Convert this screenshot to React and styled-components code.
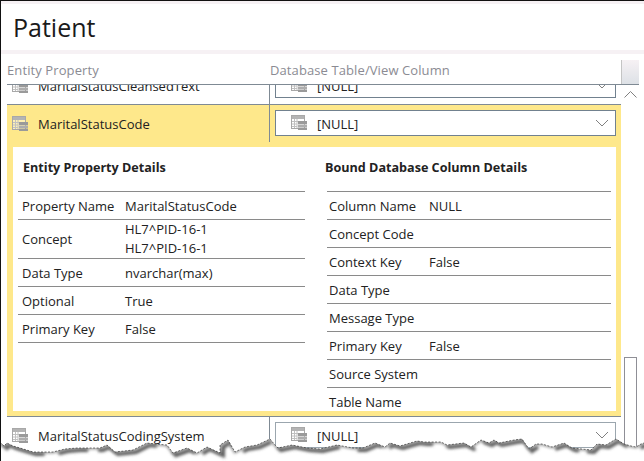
import styled, { createGlobalStyle } from "styled-components";

const GlobalStyle = createGlobalStyle`
  html, body {
    margin: 0;
    padding: 0;
    background: #fff;
  }
  body {
    font-family: "Open Sans", "Noto Sans", sans-serif;
    color: #222;
  }
`;

const Page = styled.div`
  position: relative;
  width: 644px;
  height: 461px;
  overflow: hidden;
  background: #fff;
  box-sizing: border-box;
  border-top: 1px solid #111;
  border-left: 1px solid #111;
  display: flex;
  flex-direction: column;
`;

const TitleBar = styled.div`
  height: 46px;
  margin-top: 3px;
  padding-left: 12px;
  font-size: 25px;
  line-height: 46px;
  color: #1a1a1a;
  background: #fff;
  box-shadow: 0 -3px 0 #f6f1f4;
  flex: none;
`;

const Stripe = styled.div`
  height: 4px;
  background: #f6f1f4;
  flex: none;
`;

const HeaderRow = styled.div`
  display: flex;
  height: 30px;
  margin-left: 6px;
  width: 632px;
  flex: none;
  border-bottom: 1px solid #7f8a94;
  box-sizing: content-box;
`;

const HeaderCell = styled.div`
  width: ${(p) => p.$width}px;
  font-size: 13px;
  letter-spacing: 0.1px;
  line-height: 33px;
  color: #8b8b93;
  white-space: nowrap;
`;

const HeaderCorner = styled.div`
  margin-left: auto;
  margin-top: 6px;
  width: 17px;
  border-left: 1px solid #c4c4c4;
  background: linear-gradient(#f6f1f4, #dde1e6);
`;

const Body = styled.div`
  display: flex;
  flex: 1;
  min-height: 0;
`;

const List = styled.div`
  width: 614px;
  margin-left: 6px;
  flex: none;
`;

const ClippedRow = styled.div`
  height: 20px;
  overflow: hidden;
  display: flex;
  flex-direction: column;
  justify-content: flex-end;
`;

const Row = styled.div`
  display: flex;
  height: 37px;
  flex: none;
  border-bottom: ${(p) => (p.$plain ? "none" : "1px solid #7f8a94")};
  box-sizing: content-box;
`;

const NameCell = styled.div`
  width: 263px;
  box-sizing: border-box;
  padding-left: 5px;
  display: flex;
  align-items: center;
  gap: 9px;
  font-size: 13px;
  color: #222;
  border-right: 1px solid #7f8a94;
`;

const ComboCell = styled.div`
  flex: 1;
  padding: 5px 5px 6px 5px;
  box-sizing: border-box;
  min-width: 0;
`;

const Combo = styled.div`
  height: 26px;
  box-sizing: border-box;
  background: #fff;
  border: 1px solid ${(p) => p.$border};
  display: flex;
  align-items: center;
  padding-left: 15px;
  gap: 9px;
  font-size: 13px;
  color: #222;
`;

const ComboText = styled.span`
  padding-top: 2px;
`;

const Chevron = styled.svg`
  margin-left: auto;
  margin-right: 6px;
  flex: none;
`;

const Expanded = styled.div`
  background: #fee88b;
  border-bottom: 1px solid #7f8a94;
  box-sizing: content-box;
  height: 311px;
`;

const Details = styled.div`
  margin: 5px 5px 0 6px;
  height: 264px;
  background: #fff;
  overflow: hidden;
  display: grid;
  grid-template-columns: 287px 284px;
  column-gap: 22px;
  padding: 0 5px;
  box-sizing: border-box;
`;

const DetailTitle = styled.div`
  height: 44px;
  box-sizing: content-box;
  line-height: 42px;
  font-size: 12.6px;
  font-weight: 700;
  color: #222;
  text-indent: ${(p) => p.$indent}px;
  border-bottom: 1px solid #8a8a8a;
  white-space: nowrap;
`;

const DetailRow = styled.div`
  display: flex;
  align-items: center;
  height: ${(p) => (p.$tall ? 39 : 28)}px;
  border-bottom: 1px solid #8a8a8a;
  font-size: 13px;
  line-height: 19px;
  color: #222;
  padding: ${(p) => (p.$tall ? 0 : 1)}px 0 0 ${(p) => p.$inset}px;
  box-sizing: border-box;
`;

const Label = styled.div`
  width: ${(p) => p.$width}px;
  flex: none;
`;

const ScrollColumn = styled.div`
  flex: 1;
  display: flex;
  flex-direction: column;
  align-items: flex-start;
  padding-left: 3px;
`;

const ScrollUp = styled.svg`
  margin-top: 6px;
  flex: none;
`;

const ScrollThumb = styled.div`
  margin-top: 259px;
  width: 13px;
  height: 120px;
  flex: none;
  box-sizing: border-box;
  background: #fff;
  border: 1px solid #8f8f96;
  border-bottom: none;
`;

const TornEdge = styled.svg`
  position: absolute;
  left: -1px;
  top: -1px;
  pointer-events: none;
`;

const edge =
  "0,442 4,446 7,443 13,446 20,448 33,452 53,452 65,449 77,448 100,448 107,445 115,452 124,451 133,450 147,443 156,444 167,445 173,453 187,448 197,453 207,447 220,453 " +
  "220,445 228,440 235,452 245,447 257,445 270,439 275,445 278,448 292,445 307,448 320,449 337,445 353,448 363,448 375,443 385,447 390,443 400,446 417,441 424,442 " +
  "441,442 447,445 464,443 471,447 481,440 489,443 494,440 499,443 514,440 522,439 529,449 536,444 542,444 552,447 564,443 572,448 591,450 597,444 606,445 616,439 624,444 631,446 636,447 641,444 644,443";

const TableIcon = () => (
  <svg width="17" height="16" viewBox="0 0 17 16" style={{ flex: "none" }}>
    <rect x="0.5" y="0.5" width="13" height="13" fill="#fff" fillOpacity="0.35" stroke="#a8a8a8" />
    <rect x="1" y="1" width="12" height="3" fill="#b4b4b4" />
    <path d="M1 6.5h7M1 9h5M1 11.5h5M3.5 4v9M6 4v9" stroke="#c0c0c0" strokeWidth="1" fill="none" />
    <rect x="7" y="6" width="9" height="3" fill="#9a9a9a" />
    <rect x="7" y="9.5" width="9" height="2.5" fill="#adadad" />
    <rect x="7" y="12.5" width="9" height="2.5" fill="#9a9a9a" />
  </svg>
);

const ComboBox = ({ border }) => (
  <Combo $border={border}>
    <TableIcon />
    <ComboText>[NULL]</ComboText>
    <Chevron width="14" height="8" viewBox="0 0 14 8">
      <path d="M1 1l6 6 6-6" fill="none" stroke="#808080" strokeWidth="1" />
    </Chevron>
  </Combo>
);

const PropertyRow = ({ name, plain, comboBorder = "#71818f" }) => (
  <Row $plain={plain}>
    <NameCell>
      <TableIcon />
      <span>{name}</span>
    </NameCell>
    <ComboCell>
      <ComboBox border={comboBorder} />
    </ComboCell>
  </Row>
);

const entityDetails = [
  ["Property Name", ["MaritalStatusCode"]],
  ["Concept", ["HL7^PID-16-1", "HL7^PID-16-1"]],
  ["Data Type", ["nvarchar(max)"]],
  ["Optional", ["True"]],
  ["Primary Key", ["False"]],
];

const columnDetails = [
  ["Column Name", ["NULL"]],
  ["Concept Code", []],
  ["Context Key", ["False"]],
  ["Data Type", []],
  ["Message Type", []],
  ["Primary Key", ["False"]],
  ["Source System", []],
  ["Table Name", []],
];

const DetailColumn = ({ title, indent, inset, labelWidth, rows }) => (
  <div>
    <DetailTitle $indent={indent}>{title}</DetailTitle>
    {rows.map(([label, values]) => (
      <DetailRow key={label} $tall={values.length > 1} $inset={inset}>
        <Label $width={labelWidth}>{label}</Label>
        <div>
          {values.map((v, i) => (
            <div key={i}>{v}</div>
          ))}
        </div>
      </DetailRow>
    ))}
  </div>
);

export default function App() {
  return (
    <>
      <GlobalStyle />
      <Page>
        <TitleBar>Patient</TitleBar>
        <Stripe />
        <HeaderRow>
          <HeaderCell $width={263}>Entity Property</HeaderCell>
          <HeaderCell $width={300}>Database Table/View Column</HeaderCell>
          <HeaderCorner />
        </HeaderRow>
        <Body>
          <List>
            <ClippedRow>
              <PropertyRow name="MaritalStatusCleansedText" />
            </ClippedRow>
            <Expanded>
              <PropertyRow name="MaritalStatusCode" plain />
              <Details>
                <DetailColumn title="Entity Property Details" indent={5} inset={4} labelWidth={103} rows={entityDetails} />
                <DetailColumn title="Bound Database Column Details" indent={-2} inset={2} labelWidth={100} rows={columnDetails} />
              </Details>
            </Expanded>
            <PropertyRow name="MaritalStatusCodingSystem" comboBorder="#9ba6ae" />
          </List>
          <ScrollColumn>
            <ScrollUp width="13" height="7" viewBox="0 0 13 7">
              <path d="M0.5 6.5l6-6 6 6" fill="none" stroke="#808080" strokeWidth="1" />
            </ScrollUp>
            <ScrollThumb />
          </ScrollColumn>
        </Body>
        <TornEdge width="644" height="461" viewBox="0 0 644 461">
          <defs>
            <clipPath id="below-edge">
              <polygon points={`${edge} 644,461 0,461`} />
            </clipPath>
            <filter id="soft" x="-5%" y="-100%" width="110%" height="300%">
              <feGaussianBlur stdDeviation="1.6" />
            </filter>
          </defs>
          <polygon points={`${edge} 644,461 0,461`} fill="#fff" />
          <g clipPath="url(#below-edge)">
            <polyline
              points={edge}
              transform="translate(3 2)"
              fill="none"
              stroke="#5a5a5a"
              strokeWidth="4"
              strokeDasharray="46 14 30 10 64 18 26 8"
              filter="url(#soft)"
            />
            <polyline points={edge} fill="none" stroke="#8a8a8a" strokeWidth="2.5" filter="url(#soft)" />
          </g>
          <polyline points={edge} fill="none" stroke="#222" strokeWidth="0.6" strokeDasharray="2 1.5" />
        </TornEdge>
      </Page>
    </>
  );
}
